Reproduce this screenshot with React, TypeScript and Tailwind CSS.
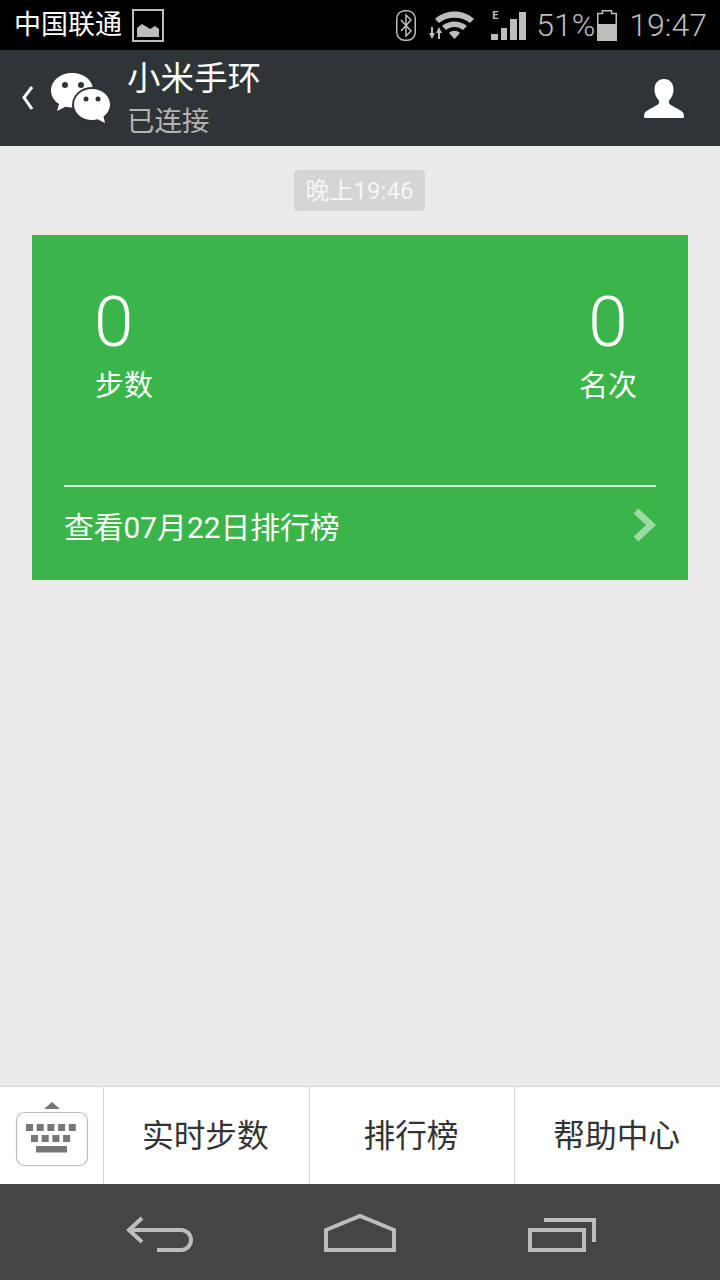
function ImageIcon() {
  return (
    <svg width="32" height="33" viewBox="0 0 32 33" className="ml-[10px]">
      <rect x="1" y="1" width="30" height="31" fill="none" stroke="#bdbdbd" strokeWidth="2" />
      <path d="M5 28V19l5-4 5 3 3 2 5-3 4 3v8z" fill="#bdbdbd" />
    </svg>
  )
}

function BluetoothIcon() {
  return (
    <svg width="20" height="31" viewBox="0 0 20 31">
      <rect x="0.75" y="0.75" width="18.5" height="29.5" rx="8" fill="none" stroke="#bdbdbd" strokeWidth="1.5" />
      <path d="M5 10l10 11-5 5V5l5 5L5 21" fill="none" stroke="#bdbdbd" strokeWidth="1.5" />
    </svg>
  )
}

function WifiIcon() {
  return (
    <svg width="46" height="30" viewBox="0 0 46 30" className="ml-[13px]">
      <path d="M6 9C16 -1 35 -1 45 9L41 13C33 6 18 6 10 13z" fill="#bdbdbd" />
      <path d="M13 16C20 10 31 10 38 16L34 20C29 16 22 16 17 20z" fill="#bdbdbd" />
      <path d="M20 23C23 20 28 20 31 23L25.5 29z" fill="#bdbdbd" />
      <path d="M2 17h2v6h2l-3 6-3-6h2zM9 29h2v-6h2l-3-6-3 6h2z" fill="#bdbdbd" />
    </svg>
  )
}

function SignalIcon() {
  return (
    <div className="relative ml-[16px] h-[30px] w-[35px]">
      <span className="absolute left-[1px] top-[-1px] font-['Roboto'] text-[11px] leading-[13px] font-bold text-[#bdbdbd]">E</span>
      <svg width="35" height="30" viewBox="0 0 35 30" className="absolute top-0 left-0">
        <rect x="0" y="24" width="7" height="6" fill="#bdbdbd" />
        <rect x="10" y="18" width="6" height="12" fill="#bdbdbd" />
        <rect x="19" y="9" width="7" height="21" fill="#bdbdbd" />
        <rect x="28" y="2" width="7" height="28" fill="#bdbdbd" />
      </svg>
    </div>
  )
}

function BatteryIcon() {
  return (
    <svg width="20" height="31" viewBox="0 0 20 31">
      <path d="M5.5 3.5V0.75h9V3.5h4.75v26.75H0.75V3.5z" fill="none" stroke="#bdbdbd" strokeWidth="1.5" />
      <rect x="0" y="14" width="20" height="17" fill="#bdbdbd" />
    </svg>
  )
}

function WechatIcon() {
  return (
    <svg width="60" height="52" viewBox="0 0 60 52" className="ml-[17px]">
      <path d="M21 1C9.5 1 0 8.8 0 18.5c0 5.6 3.1 10.4 8 13.6L6 39l8.5-4.2c2 .5 4.2.7 6.5.7 11.5 0 21-7.8 21-17.5S32.500 1 21 1z" fill="#fff" />
      <circle cx="14" cy="13" r="3" fill="#2f3436" />
      <circle cx="30" cy="13" r="3" fill="#2f3436" />
      <ellipse cx="41" cy="33" rx="20" ry="18" fill="#2f3436" />
      <path d="M41 17C31 17 23 23.800 23 32.500S31 48 41 48c2 0 3.800-.2 5.500-.7L54 51l-1.500-6.500C56.500 41.500 59 37.300 59 32.500 59 23.800 51 17 41 17z" fill="#fff" />
      <circle cx="35" cy="27" r="2.500" fill="#2f3436" />
      <circle cx="47" cy="27" r="2.500" fill="#2f3436" />
    </svg>
  )
}

function PersonIcon() {
  return (
    <svg width="42" height="41" viewBox="0 0 42 41" className="mr-[35px]">
      <path d="M21 1c6 0 9.500 4.500 9.500 10.500 0 4-1.500 8-4 10.500-.8 1-.8 3 0 4 3 2.500 9 4.500 13 8 1.200 1.200 1.500 3 1.500 4.500 0 1-.5 1.500-1.500 1.500H2.500C1.500 40 1 39.500 1 38.500 1 37 1.300 35.200 2.500 34c4-3.500 10-5.500 13-8 .8-1 .8-3 0-4-2.500-2.500-4-6.500-4-10.500C11.500 5.500 15 1 21 1z" fill="#fff" />
    </svg>
  )
}

function KeyboardIcon() {
  const rowA = [0, 1, 2, 3, 4]
  const rowB = [0, 1, 2, 3]
  return (
    <svg width="74" height="66" viewBox="0 0 74 66">
      <path d="M29 8l8-7 8 7z" fill="#777" />
      <rect x="1.500" y="11.500" width="71" height="53" rx="8" fill="#fff" stroke="#bcbcbc" strokeWidth="1.200" />
      {rowA.map((i) => (
        <rect key={i} x={11 + i * 10.700} y="23" width="7" height="7" fill="#777" />
      ))}
      {rowB.map((i) => (
        <rect key={i} x={16 + i * 10.700} y="34" width="7" height="7" fill="#777" />
      ))}
      <rect x="21" y="45" width="31" height="6.500" fill="#777" />
    </svg>
  )
}

function NavBack() {
  return (
    <svg width="68" height="40" viewBox="0 0 68 40">
      <path d="M16 6L3 18l13 12M3 18h52a10 10 0 0 1 0 20H31" fill="none" stroke="#bdbdbd" strokeWidth="4" />
    </svg>
  )
}

function NavHome() {
  return (
    <svg width="74" height="40" viewBox="0 0 74 40" className="-translate-x-px">
      <path d="M3 18L37 4l34 14v20H3z" fill="none" stroke="#bdbdbd" strokeWidth="4" />
    </svg>
  )
}

function NavRecent() {
  return (
    <svg width="70" height="40" viewBox="0 0 70 40">
      <rect x="2" y="18" width="54" height="20" fill="none" stroke="#bdbdbd" strokeWidth="4" />
      <path d="M16 8h50v22" fill="none" stroke="#bdbdbd" strokeWidth="4" />
    </svg>
  )
}

export default function App() {
  return (
    <div className="flex h-[1280px] w-[720px] flex-col bg-[#ebebeb] font-['Roboto','Noto_Sans_CJK_SC',sans-serif]">
      {/* status bar */}
      <div className="flex h-[50px] items-center bg-black">
        <div className="flex items-center pl-[14px]">
          <span className="text-[27px] leading-none text-white">中国联通</span>
          <ImageIcon />
        </div>
        <div className="ml-auto flex items-center pr-[13px]">
          <BluetoothIcon />
          <WifiIcon />
          <SignalIcon />
          <span className="ml-[10px] text-[32px] leading-none font-light text-[#bdbdbd]">51%</span>
          <span className="ml-[2px]">
            <BatteryIcon />
          </span>
          <span className="ml-[12px] text-[32px] leading-none font-light text-[#bdbdbd]">19:47</span>
        </div>
      </div>

      {/* header */}
      <div className="flex h-[96px] items-center bg-[#2f3436]">
        <svg width="12" height="26" viewBox="0 0 12 26" className="ml-[22px]">
          <path d="M10 2L2 12.500 10 24" fill="none" stroke="#fff" strokeWidth="3" />
        </svg>
        <WechatIcon />
        <div className="ml-[16px] flex flex-col">
          <span className="text-[33.500px] leading-[44px] text-white">小米手环</span>
          <span className="mt-[3px] text-[27.500px] leading-[36px] text-[#b4b4b4]">已连接</span>
        </div>
        <div className="ml-auto">
          <PersonIcon />
        </div>
      </div>

      {/* chat */}
      <div className="flex flex-1 flex-col items-center">
        <div className="mt-[24px] mr-[1px] flex h-[41px] w-[131px] items-center justify-center rounded-[4px] bg-[#d5d5d5] text-[24px] text-[#f6f6f6]">
          晚上19:46
        </div>
        <div className="mt-[24px] flex h-[345px] w-[656px] flex-col bg-[#3ab54a] px-[32px] text-white">
          <div className="flex h-[250px] justify-between pt-[45px] pr-[19px] pl-[30px]">
            <div className="flex flex-col items-start">
              <div className="text-[71px] leading-[84px] font-[350]">0</div>
              <div className="mt-[2px] ml-[1px] text-[29px] leading-[40px]">步数</div>
            </div>
            <div className="flex flex-col items-center">
              <div className="text-[71px] leading-[84px] font-[350]">0</div>
              <div className="mt-[2px] text-[29px] leading-[40px]">名次</div>
            </div>
          </div>
          <div className="h-[2px] bg-[#d8f5d8]" />
          <div className="flex flex-1 items-center justify-between pb-[10px]">
            <span className="text-[29.800px]">查看07月22日排行榜</span>
            <svg width="24" height="36" viewBox="0 0 24 36" className="mb-[8px] opacity-50">
              <path d="M4 4l15 14L4 32" fill="none" stroke="#fff" strokeWidth="7" />
            </svg>
          </div>
        </div>
      </div>

      {/* menu */}
      <div className="flex h-[98px] border-t border-[#d4d4d4] bg-white">
        <div className="flex w-[103px] items-start justify-center pt-[14px]">
          <KeyboardIcon />
        </div>
        {['实时步数', '排行榜', '帮助中心'].map((label) => (
          <div key={label} className="flex flex-1 items-center justify-center border-l border-[#d4d4d4] pt-[2px] pr-[2px] text-[31.700px] text-[#333]">
            {label}
          </div>
        ))}
      </div>

      {/* nav bar */}
      <div className="flex h-[96px] items-center justify-between bg-[#454545] pr-[122px] pl-[126px]">
        <NavBack />
        <NavHome />
        <NavRecent />
      </div>
    </div>
  )
}
